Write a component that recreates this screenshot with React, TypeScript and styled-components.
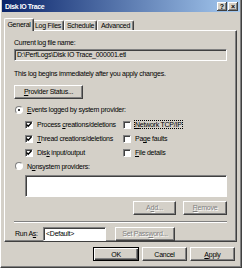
import React from "react";
import styled, { createGlobalStyle, css } from "styled-components";

const Global = createGlobalStyle`
  html, body { margin: 0; padding: 0; background: #d4d0c8; }
  body { font-family: "Liberation Sans", Arial, sans-serif; font-size: 7px; letter-spacing: -0.25px; color: #000; }
  * { box-sizing: border-box; }
`;

const Window = styled.div`
  width: 242px;
  height: 268px;
  background: #d4d0c8;
  border-left: 1px solid #fff;
  border-right: 1px solid #404040;
  border-bottom: 1px solid #404040;
  box-shadow: inset -1px -1px 0 #808080;
  display: flex;
  flex-direction: column;
  overflow: hidden;
`;

const TitleBar = styled.div`
  height: 12px;
  margin: 0 1px 0 1px;
  background: linear-gradient(to right, #0a246a, #a6caf0);
  display: flex;
  align-items: center;
  padding: 0 2px 0 3px;
`;

const Title = styled.div`
  flex: 1;
  color: #fff;
  font-weight: bold;
  font-size: 7px;
  letter-spacing: -0.4px;
`;

const CapButton = styled.div`
  width: 10px;
  height: 9px;
  background: #d4d0c8;
  box-shadow: inset -1px -1px 0 #404040, inset 1px 1px 0 #fff, inset -2px -2px 0 #808080;
  font-weight: bold;
  font-size: 7px;
  line-height: 9px;
  text-align: center;
  letter-spacing: 0;
  color: #000;
`;

const Body = styled.div`
  flex: 1;
  display: flex;
  flex-direction: column;
  padding: 6px 3px 0 3px;
`;

const TabStrip = styled.div`
  height: 12px;
  display: flex;
  align-items: flex-end;
  padding-left: 2px;
  position: relative;
  z-index: 1;
`;

const Tab = styled.div<{ $w: number; $active?: boolean }>`
  width: ${(p) => p.$w}px;
  height: 10px;
  background: #d4d0c8;
  border-top: 1px solid #fff;
  border-left: 1px solid #fff;
  border-right: 1px solid #404040;
  border-radius: 2px 2px 0 0;
  box-shadow: inset -1px 0 0 #808080;
  display: flex;
  align-items: center;
  justify-content: center;
  line-height: 8px;
  ${(p) =>
    p.$active &&
    css`
      height: 13px;
      margin: 0 -2px -1px -2px;
      padding-bottom: 1px;
      position: relative;
    `}
`;

const Panel = styled.div`
  height: 212px;
  margin-right: 1px;
  border-top: 1px solid #fff;
  border-left: 1px solid #fff;
  border-right: 1px solid #404040;
  border-bottom: 1px solid #404040;
  box-shadow: inset -1px -1px 0 #808080;
  padding: 6px 9px 0 9px;
  display: flex;
  flex-direction: column;
`;

const Label = styled.div<{ $mt?: number }>`
  height: 9px;
  line-height: 9px;
  margin-top: ${(p) => p.$mt ?? 0}px;
  white-space: nowrap;
`;

const Field = styled.div<{ $readonly?: boolean; $w?: number }>`
  height: 12px;
  ${(p) => (p.$w ? `width: ${p.$w}px;` : "")}
  background: ${(p) => (p.$readonly ? "#d4d0c8" : "#fff")};
  border-top: 1px solid #808080;
  border-left: 1px solid #808080;
  border-right: 1px solid #fff;
  border-bottom: 1px solid #fff;
  box-shadow: inset 1px 1px 0 #404040;
  padding: 0 2px;
  line-height: 10px;
  white-space: nowrap;
  overflow: hidden;
`;

const Button = styled.div<{ $w: number; $disabled?: boolean; $default?: boolean }>`
  width: ${(p) => p.$w}px;
  height: 14px;
  background: #d4d0c8;
  border-top: 1px solid #fff;
  border-left: 1px solid #fff;
  border-right: 1px solid #404040;
  border-bottom: 1px solid #404040;
  box-shadow: inset -1px -1px 0 #808080;
  display: flex;
  align-items: center;
  justify-content: center;
  line-height: 9px;
  white-space: nowrap;
  ${(p) =>
    p.$disabled &&
    css`
      color: #808080;
      text-shadow: 1px 1px 0 #fff;
    `}
  ${(p) =>
    p.$default &&
    css`
      border: 1px solid #000;
      box-shadow: inset 1px 1px 0 #fff, inset -1px -1px 0 #404040, inset -2px -2px 0 #808080;
    `}
`;

const Row = styled.div<{ $mt?: number; $gap?: number; $justify?: string }>`
  display: flex;
  align-items: center;
  margin-top: ${(p) => p.$mt ?? 0}px;
  gap: ${(p) => p.$gap ?? 0}px;
  justify-content: ${(p) => p.$justify ?? "flex-start"};
`;

const OptionRow = styled.div<{ $mt?: number; $indent?: number }>`
  display: flex;
  align-items: center;
  height: 10px;
  margin-top: ${(p) => p.$mt ?? 0}px;
  margin-left: ${(p) => p.$indent ?? 0}px;
  gap: 4px;
  white-space: nowrap;
`;

const RadioDot = styled.div<{ $on?: boolean }>`
  width: 8px;
  height: 8px;
  border-radius: 50%;
  background: #fff;
  border: 1px solid;
  border-color: #808080 #fff #fff #808080;
  display: flex;
  align-items: center;
  justify-content: center;
  &::after {
    content: "";
    width: 2px;
    height: 2px;
    border-radius: 50%;
    background: ${(p) => (p.$on ? "#000" : "transparent")};
  }
`;

const CheckBox = styled.div`
  width: 8px;
  height: 8px;
  background: #fff;
  border: 1px solid;
  border-color: #808080 #fff #fff #808080;
  box-shadow: inset 1px 1px 0 #404040;
  display: flex;
  align-items: center;
  justify-content: center;
`;

const ChecksGrid = styled.div`
  display: grid;
  grid-template-columns: 98px auto;
  row-gap: 4px;
  margin-top: 5px;
  margin-left: 11px;
`;

const Focus = styled.span`
  outline: 1px dotted #000;
  outline-offset: 0px;
`;

const ListBox = styled.div`
  height: 22px;
  margin-top: 4px;
  margin-left: 11px;
  background: #fff;
  border-top: 1px solid #808080;
  border-left: 1px solid #808080;
  border-right: 1px solid #fff;
  border-bottom: 1px solid #fff;
  box-shadow: inset 1px 1px 0 #404040;
`;

const Separator = styled.div`
  height: 2px;
  margin-top: 6px;
  border-top: 1px solid #808080;
  border-bottom: 1px solid #fff;
`;

const Footer = styled.div`
  display: flex;
  justify-content: flex-end;
  gap: 3px;
  margin-top: 5px;
  padding-right: 3px;
`;

const U = styled.span`
  text-decoration: underline;
`;

const Check = ({ on }: { on: boolean }) => (
  <CheckBox>
    {on && (
      <svg width="6" height="6" viewBox="0 0 6 6">
        <path d="M0.5 2.5 L2.2 4.3 L5.5 0.8" stroke="#000" strokeWidth="1.3" fill="none" />
      </svg>
    )}
  </CheckBox>
);

export default function App() {
  return (
    <>
      <Global />
      <Window>
        <TitleBar>
          <Title>Disk IO Trace</Title>
          <CapButton>?</CapButton>
          <CapButton style={{ marginLeft: 1 }}>×</CapButton>
        </TitleBar>
        <Body>
          <TabStrip>
            <Tab $w={30} $active>General</Tab>
            <Tab $w={32}>Log Files</Tab>
            <Tab $w={33}>Schedule</Tab>
            <Tab $w={37}>Advanced</Tab>
          </TabStrip>
          <Panel>
            <Label $mt={1}>Current log file name:</Label>
            <Field $readonly style={{ marginTop: 2 }}>D:\PerfLogs\Disk IO Trace_000001.etl</Field>
            <Label $mt={8}>This log begins immediately after you apply changes.</Label>
            <Row $mt={7}>
              <Button $w={69}>
                <span><U>P</U>rovider Status...</span>
              </Button>
            </Row>
            <OptionRow $mt={6} $indent={1}>
              <RadioDot $on />
              <span><U>E</U>vents logged by system provider:</span>
            </OptionRow>
            <ChecksGrid>
              <OptionRow>
                <Check on />
                <span>Process <U>c</U>reations/deletions</span>
              </OptionRow>
              <OptionRow>
                <Check on={false} />
                <Focus><U>N</U>etwork TCP/IP</Focus>
              </OptionRow>
              <OptionRow>
                <Check on />
                <span><U>T</U>hread creations/deletions</span>
              </OptionRow>
              <OptionRow>
                <Check on={false} />
                <span>Pa<U>g</U>e faults</span>
              </OptionRow>
              <OptionRow>
                <Check on />
                <span>Dis<U>k</U> input/output</span>
              </OptionRow>
              <OptionRow>
                <Check on={false} />
                <span><U>F</U>ile details</span>
              </OptionRow>
            </ChecksGrid>
            <OptionRow $mt={4} $indent={1}>
              <RadioDot />
              <span>N<U>o</U>nsystem providers:</span>
            </OptionRow>
            <ListBox />
            <Row $mt={4} $gap={7} $justify="flex-end">
              <Button $w={43} $disabled>
                <span>A<U>d</U>d...</span>
              </Button>
              <Button $w={44} $disabled>
                <span><U>R</U>emove</span>
              </Button>
            </Row>
            <Separator />
            <Row $mt={4}>
              <span style={{ width: 29, paddingLeft: 1 }}>Run A<U>s</U>:</span>
              <Field $w={63} style={{ height: 14, lineHeight: "12px" }}>&lt;Default&gt;</Field>
              <Button $w={60} $disabled style={{ marginLeft: 9 }}>
                <span>Set Pass<U>w</U>ord...</span>
              </Button>
            </Row>
          </Panel>
          <Footer>
            <Button $w={46} $default>OK</Button>
            <Button $w={45}>Cancel</Button>
            <Button $w={45}><span><U>A</U>pply</span></Button>
          </Footer>
        </Body>
      </Window>
    </>
  );
}
